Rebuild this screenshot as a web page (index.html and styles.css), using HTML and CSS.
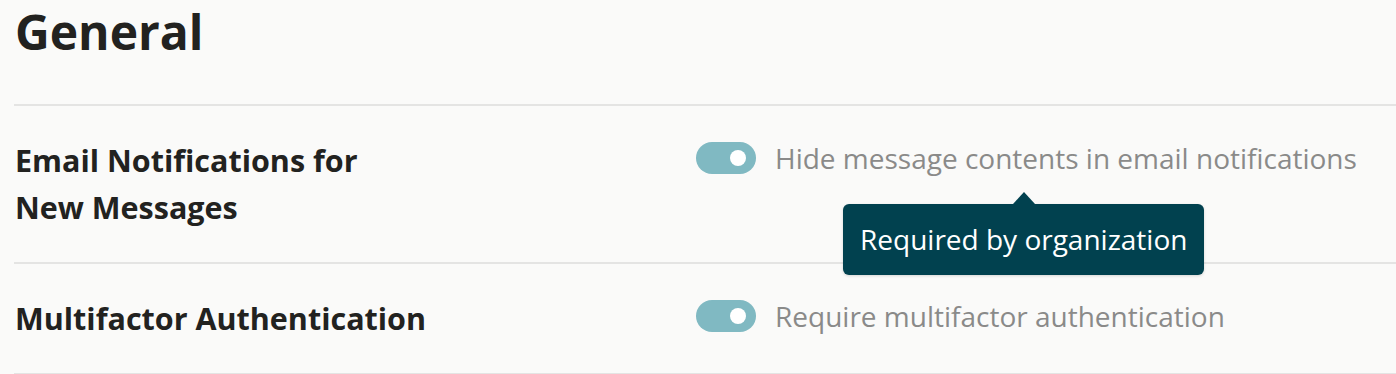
FILE: index.html
```html
<!DOCTYPE html>
<html>
  <head>
    <meta charset="utf-8" />
    <title>Settings</title>
    <link rel="stylesheet" href="styles.css">
  </head>

  <body>
    <div class="settings">
      <h1>General</h1>

      <!-- email row -->
      <div class="setting-row">
        <div class="setting-label">Email Notifications for<br />New Messages</div>
        <div class="setting-control">
          <span class="toggle on"><span class="knob"></span></span>
          <span class="hint">
            Hide message contents in email notifications
            <span class="tooltip">Required by organization</span>
          </span>
        </div>
      </div>

      <!-- mfa row -->
      <div class="setting-row">
        <div class="setting-label">Multifactor Authentication</div>
        <div class="setting-control">
          <span class="toggle on"><span class="knob"></span></span>
          <span class="hint">Require multifactor authentication</span>
        </div>
      </div>
    </div>
  </body>
</html>
```

FILE: styles.css
```css
html,
body {
  margin: 0;
  padding: 0;
  background-color: #fafaf9;
  font-family: "Open Sans", "Noto Sans", sans-serif;
  color: #222220;
  overflow: hidden;
}

.settings {
  padding-left: 14px;
}

h1 {
  margin: 0;
  padding: 0 0 0 1px;
  font-size: 48px;
  font-weight: 700;
  line-height: 64px;
  height: 104px;
  border-bottom: 2px solid #e4e4e3;
}

.setting-row {
  display: grid;
  grid-template-columns: 681px 1fr;
  padding: 31px 0 31px 1px;
  border-bottom: 2px solid #e4e4e3;
}

.setting-label {
  font-size: 30.5px;
  font-weight: 700;
  line-height: 47px;
}

.setting-control {
  display: flex;
  align-items: flex-start;
  gap: 19px;
}

/* toggle switch */
.toggle {
  flex: none;
  position: relative;
  width: 60px;
  height: 32px;
  margin-top: 5px;
  border-radius: 16px;
  background-color: #80b9c2;
}
.toggle .knob {
  position: absolute;
  top: 8px;
  right: 10px;
  width: 16px;
  height: 16px;
  border-radius: 50%;
  background-color: #fff;
}

.hint {
  position: relative;
  font-size: 28px;
  line-height: 42px;
  color: #8a8a89;
}

/* tooltip */
.tooltip {
  position: absolute;
  top: 67px;
  left: 68px;
  padding: 0 17px;
  height: 71px;
  line-height: 71px;
  white-space: nowrap;
  border-radius: 6px;
  background-color: #01414f;
  color: #fff;
  font-size: 28px;
  box-shadow: 0 1px 3px rgba(0, 0, 0, 0.15);
}
.tooltip::before {
  content: "";
  position: absolute;
  top: -12px;
  left: 50%;
  margin-left: -11px;
  border-left: 11px solid transparent;
  border-right: 11px solid transparent;
  border-bottom: 12px solid #01414f;
}
```
